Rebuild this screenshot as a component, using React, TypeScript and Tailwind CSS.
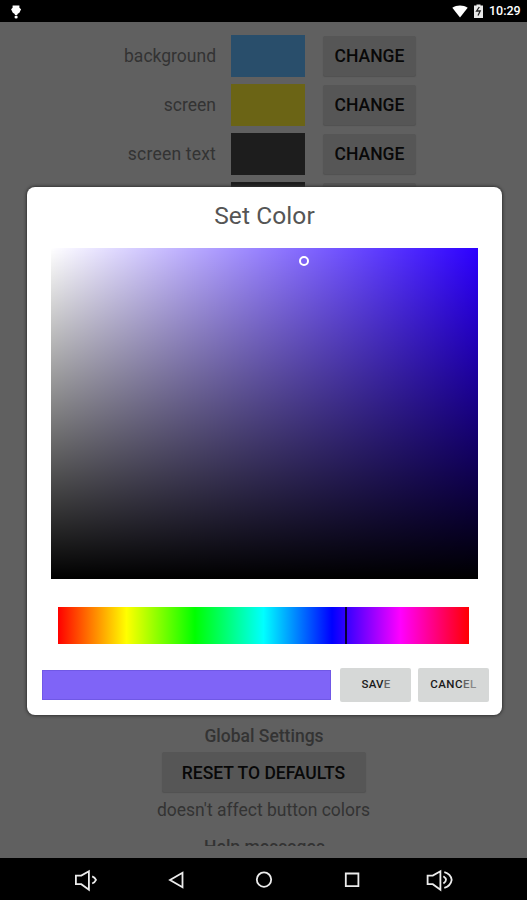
import type { ReactNode } from "react";

const swatches = [
  { label: "background", color: "bg-[#294e6b]" },
  { label: "screen", color: "bg-[#6b6415]" },
  { label: "screen text", color: "bg-[#1d1d1d]" },
  { label: "", color: "bg-[#1d1d1d]" },
];

function StatusBar() {
  return (
    <header className="flex h-[22px] shrink-0 items-center justify-between bg-black pr-[6px] pl-[10px] text-white">
      <svg className="mt-[2px]" width="12" height="16" viewBox="0 0 12 16" fill="currentColor" aria-hidden>
        <path d="M2.6 1.5h6.8v2.2l1.7 1.6-1.7 3.4-2 1.4v1H4.8v-1l-2-1.4L1.1 5.3l1.5-1.6z" />
        <circle cx="6.1" cy="13" r="1.6" />
      </svg>
      <div className="mt-[1px] flex items-center">
        <svg width="16" height="13" viewBox="0 0 16 13" fill="currentColor" aria-hidden>
          <path d="M0.3 2.8C4.8-.3 11.2-.3 15.7 2.8L8 12.5z" />
        </svg>
        <svg className="ml-[5px]" width="11" height="15" viewBox="0 0 11 15" aria-hidden>
          <path fill="#e8e8e8" d="M3.5 0.5h4V1.5H10v12.5H1V1.5h2.5z" />
          <path fill="none" stroke="#222" strokeWidth="1.3" d="M6.3 3 3.6 7h3.6L5 11.5" />
        </svg>
        <span className="ml-[5px] w-[32px] text-[12.5px] leading-none font-medium whitespace-nowrap">10:29</span>
      </div>
    </header>
  );
}

function DimButton({ children, className }: { children: ReactNode; className: string }) {
  return (
    <button
      className={`flex shrink-0 items-center justify-center rounded-[2px] bg-[#565656] text-[17.5px] font-medium whitespace-nowrap text-[#080808] shadow-[0_1px_1px_#515151] ${className}`}
    >
      {children}
    </button>
  );
}

function Settings() {
  return (
    <main className="flex flex-1 flex-col overflow-hidden pt-[13px] text-[17.5px] text-[#333]">
      <div className="flex flex-col gap-[7px]">
        {swatches.map((s, i) => (
          <div key={i} className="flex h-[42px] shrink-0 items-center">
            <span className={`w-[216px] text-right ${i === 2 ? "tracking-[0.2px]" : ""}`}>{s.label}</span>
            <div className={`ml-[15px] h-[42px] w-[74px] ${s.color}`} />
            <DimButton className="ml-[18px] h-[40px] w-[93px]">CHANGE</DimButton>
          </div>
        ))}
      </div>
      <div className="mt-auto flex h-[122px] flex-col items-center overflow-hidden">
        <h2 className="mt-[1px] mb-[4px] h-[23px] shrink-0 pl-[1px] leading-[22px] font-medium">Global Settings</h2>
        <DimButton className="h-[40px] w-[204px] pt-[2px]">RESET TO DEFAULTS</DimButton>
        <p className="mt-[7px] h-[22px] shrink-0 leading-[22px]">doesn't affect button colors</p>
        <h2 className="mt-[15px] shrink-0 pl-[2px] leading-[22px] font-medium">Help messages</h2>
      </div>
      <div className="h-[12px] shrink-0" />
    </main>
  );
}

function ColorDialog() {
  return (
    <div
      role="dialog"
      className="absolute top-[187px] left-[27px] flex h-[528px] w-[475px] flex-col rounded-[8px] bg-white shadow-[0_0_3px_1px_#333]"
    >
      <h1 className="h-[61px] pt-[14px] text-center text-[24.5px] leading-[30px] tracking-[0.1px] text-[#555]">
        Set Color
      </h1>
      <div className="relative ml-[24px] h-[331px] w-[427px] bg-[#2d00ff] bg-[linear-gradient(to_top,#000,transparent),linear-gradient(to_right,#fff,transparent)]">
        <span className="absolute top-[8px] left-[248px] size-[10px] rounded-full border-[2.5px] border-white" />
      </div>
      <div className="relative mt-[28px] ml-[31px] h-[37px] w-[411px] bg-[linear-gradient(to_right,#f00,#ff0,#0f0,#0ff,#00f,#f0f,#f00)]">
        <span className="absolute top-0 left-[287px] h-full w-[2px] bg-[#080038]" />
      </div>
      <div className="mt-[24px] ml-[15px] flex items-center text-[11.5px] font-medium text-[#1a1a1a]">
        <div className="h-[30px] w-[289px] border border-[#7058e6] bg-[#7f64f7]" />
        <button className="ml-[9px] flex h-[34px] w-[71px] items-center justify-center rounded-[2px] bg-[#d6d8d7] pl-px tracking-[0.2px]">
          SAV<span className="text-[#666]">E</span>
        </button>
        <button className="ml-[7px] flex h-[34px] w-[71px] items-center justify-center rounded-[2px] bg-[#d6d8d7] tracking-[0.5px]">
          CANC<span className="text-[#666]">E</span>
          <span className="text-[#888]">L</span>
        </button>
      </div>
    </div>
  );
}

function NavBar() {
  return (
    <nav className="h-[42px] shrink-0 bg-black">
      <svg width="527" height="42" viewBox="0 0 527 42" fill="none" stroke="#ececec" strokeWidth="1.8" aria-hidden>
        <path d="M75.9 17.6v8.6h5.4l7.6 5.6V13.2l-7.6 4.4z" />
        <path d="M92.2 18.4q2.6 1 3.8 3.5-1.2 2.6-3.8 3.6" />
        <path d="M182.5 14.8v14.4L170 22z" />
        <circle cx="264" cy="21.6" r="7.2" />
        <path d="M345.8 15.5h12.6v12.6h-12.6z" />
        <path d="M427.6 17.6v8.6h5.2l7.6 5.6V13.2l-7.6 4.4z" />
        <path d="M443.4 18.2q5.2 3.6 0 7.4M444.3 14.2q6.4 1.6 7.4 7.7-1 6.2-7.4 8" />
      </svg>
    </nav>
  );
}

export default function App() {
  return (
    <div className="relative flex h-[900px] w-[527px] flex-col overflow-hidden bg-[#606060] font-['Roboto',sans-serif]">
      <StatusBar />
      <Settings />
      <NavBar />
      <ColorDialog />
    </div>
  );
}
